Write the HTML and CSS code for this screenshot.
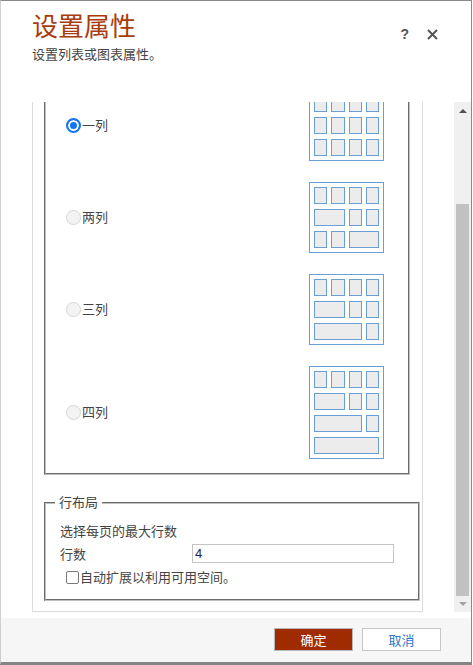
FILE: index.html
```html
<html><head>
  <meta charset="UTF-8">
  <meta name="viewport" content="width=device-width, initial-scale=1.0">
  <title>设置属性</title>
  <link rel="stylesheet" href="styles.css">
</head>
<body>
  <div class="dialog">
    <div class="header">
      <div class="heading">
        <div class="title">设置属性</div>
        <div class="subtitle">设置列表或图表属性。</div>
      </div>
      <div class="actions">
        <span class="help">?</span>
        <svg class="close" width="11" height="11" viewBox="0 0 11 11">
          <path d="M1 1 L10 10 M10 1 L1 10" stroke="#555" stroke-width="2" fill="none"/>
        </svg>
      </div>
    </div>

    <div class="body">
      <div class="scroll-view">
        <div class="panel">
          <fieldset class="group columns">
            <div class="option">
              <label class="choice"><input type="radio" name="cols" checked>一列</label>
              <div class="layout-icon">
                <span class="cell"></span><span class="cell"></span><span class="cell"></span><span class="cell"></span>
                <span class="cell"></span><span class="cell"></span><span class="cell"></span><span class="cell"></span>
                <span class="cell"></span><span class="cell"></span><span class="cell"></span><span class="cell"></span>
              </div>
            </div>
            <div class="option">
              <label class="choice"><input type="radio" name="cols">两列</label>
              <div class="layout-icon">
                <span class="cell"></span><span class="cell"></span><span class="cell"></span><span class="cell"></span>
                <span class="cell span-2"></span><span class="cell"></span><span class="cell"></span>
                <span class="cell"></span><span class="cell"></span><span class="cell span-2"></span>
              </div>
            </div>
            <div class="option">
              <label class="choice"><input type="radio" name="cols">三列</label>
              <div class="layout-icon">
                <span class="cell"></span><span class="cell"></span><span class="cell"></span><span class="cell"></span>
                <span class="cell span-2"></span><span class="cell"></span><span class="cell"></span>
                <span class="cell span-3"></span><span class="cell"></span>
              </div>
            </div>
            <div class="option">
              <label class="choice"><input type="radio" name="cols">四列</label>
              <div class="layout-icon">
                <span class="cell"></span><span class="cell"></span><span class="cell"></span><span class="cell"></span>
                <span class="cell span-2"></span><span class="cell"></span><span class="cell"></span>
                <span class="cell span-3"></span><span class="cell"></span>
                <span class="cell span-4"></span>
              </div>
            </div>
          </fieldset>

          <fieldset class="group rows">
            <legend>行布局</legend>
            <div class="hint">选择每页的最大行数</div>
            <div class="field">
              <label class="field-label" for="row-count">行数</label>
              <input class="text-input" id="row-count" type="text" value="4">
            </div>
            <label class="check"><input type="checkbox">自动扩展以利用可用空间。</label>
          </fieldset>
        </div>
      </div>
      <div class="scrollbar">
        <div class="sb-button"><span class="arrow-up"></span></div>
        <div class="sb-track"><div class="sb-thumb"></div></div>
        <div class="sb-button down"><span class="arrow-down"></span></div>
      </div>
    </div>

    <div class="footer">
      <button class="btn primary">确定</button>
      <button class="btn">取消</button>
    </div>
  </div>
</body>
</html>
```

FILE: styles.css
```css
body, html {
  margin: 0;
  padding: 0;
  background-color: #fff;
  font-family: 'Liberation Sans', 'Noto Sans CJK SC', sans-serif;
  font-size: 13px;
  color: #444;
}
.dialog {
  width: 472px;
  height: 665px;
  box-sizing: border-box;
  border-top: 1px solid #8a8a8a;
  border-left: 1px solid #cfcfcf;
  border-right: 1px solid #8a8a8a;
  border-bottom: 3px solid #858585;
  display: flex;
  flex-direction: column;
}
.header {
  height: 101px;
  flex: none;
  display: flex;
  justify-content: space-between;
  padding: 10px 33px 0 31px;
  box-sizing: border-box;
}
.title {
  font-size: 26px;
  line-height: 32px;
  color: #a83c0c;
}
.subtitle {
  margin-top: 3px;
  font-size: 13px;
  line-height: 18px;
  color: #444;
}
.actions {
  display: flex;
  align-items: center;
  gap: 18px;
  height: 16px;
  margin-top: 15px;
}
.help {
  font-weight: bold;
  font-size: 14px;
  color: #555;
}
.body {
  height: 510px;
  flex: none;
  display: flex;
}
.scroll-view {
  flex: 1;
  overflow: hidden;
  display: flex;
  flex-direction: column;
  justify-content: flex-end;
}
.panel {
  flex: none;
  width: 391px;
  margin-left: 31px;
  box-sizing: border-box;
  border: 1px solid #dcdcdc;
  padding: 0 12px 10px 11px;
}
.group {
  margin: 0;
  border: 2px groove #c0c0c0;
  padding: 12px 24px 14px 14px;
}
.group legend {
  padding: 0 4px;
  margin-left: -5px;
  line-height: 17px;
}
.columns {
  padding-left: 20px;
  display: flex;
  flex-direction: column;
  gap: 21px;
}
.option {
  display: flex;
  justify-content: space-between;
  align-items: center;
}
.choice {
  display: flex;
  align-items: center;
  line-height: 17px;
}
.choice input {
  appearance: none;
  margin: 0 1px 0 0;
  width: 15px;
  height: 15px;
  box-sizing: border-box;
  border-radius: 50%;
  border: 1px solid #d6d6d6;
  background-color: #f3f3f3;
}
.choice input:checked {
  border: 2px solid #1577f0;
  background-color: #1577f0;
  box-shadow: inset 0 0 0 2px #fff;
}
.layout-icon {
  width: 75px;
  box-sizing: border-box;
  border: 1px solid #6a9fd6;
  padding: 4px;
  display: grid;
  grid-template-columns: repeat(4, 1fr);
  grid-auto-rows: 17px;
  gap: 5px 4px;
}
.cell {
  border: 1px solid #6a9fd6;
  background-color: #ececec;
}
.span-2 { grid-column: span 2; }
.span-3 { grid-column: span 3; }
.span-4 { grid-column: span 4; }
.rows {
  margin-top: 19px;
  padding-bottom: 13px;
}
.hint {
  line-height: 17px;
}
.field {
  display: flex;
  align-items: center;
  margin-top: 4px;
}
.field-label {
  width: 132px;
}
.text-input {
  width: 202px;
  height: 19px;
  box-sizing: border-box;
  border: 1px solid #c4c4c4;
  padding: 0 2px;
  font-family: 'Liberation Sans', sans-serif;
  font-size: 13px;
  color: #1c1c50;
  outline: none;
}
.check {
  display: flex;
  align-items: center;
  margin-top: 6px;
  padding-left: 6px;
  line-height: 17px;
}
.check input {
  appearance: none;
  margin: 0 1px 0 0;
  width: 13px;
  height: 13px;
  box-sizing: border-box;
  border: 1px solid #7a7a7a;
  border-radius: 2px;
  background-color: #fff;
}
.scrollbar {
  width: 17px;
  flex: none;
  background-color: #f0f0f0;
  display: flex;
  flex-direction: column;
}
.sb-button {
  height: 17px;
  flex: none;
  display: flex;
  justify-content: center;
  align-items: center;
}
.sb-button.down {
  height: 16px;
}
.arrow-up {
  width: 0;
  height: 0;
  border-left: 4px solid transparent;
  border-right: 4px solid transparent;
  border-bottom: 4px solid #505050;
}
.arrow-down {
  width: 0;
  height: 0;
  border-left: 4px solid transparent;
  border-right: 4px solid transparent;
  border-top: 4px solid #a3a3a3;
}
.sb-track {
  flex: 1;
  display: flex;
  flex-direction: column;
  justify-content: flex-end;
  align-items: center;
}
.sb-thumb {
  width: 13px;
  height: 392px;
  background-color: #c1c1c1;
}
.footer {
  margin-top: 6px;
  height: 44px;
  flex: none;
  background-color: #f6f6f6;
  display: flex;
  justify-content: flex-end;
  align-items: flex-start;
  gap: 9px;
  padding: 10px 30px 0 0;
  box-sizing: border-box;
}
.btn {
  width: 79px;
  height: 23px;
  border: 1px solid #c6c6c6;
  background-color: #fff;
  font-family: 'Liberation Sans', 'Noto Sans CJK SC', sans-serif;
  font-size: 13px;
  color: #2f74c8;
  padding: 0;
}
.btn.primary {
  background-color: #a02b00;
  border-color: #b8b8b8;
  color: #fff;
}
```
